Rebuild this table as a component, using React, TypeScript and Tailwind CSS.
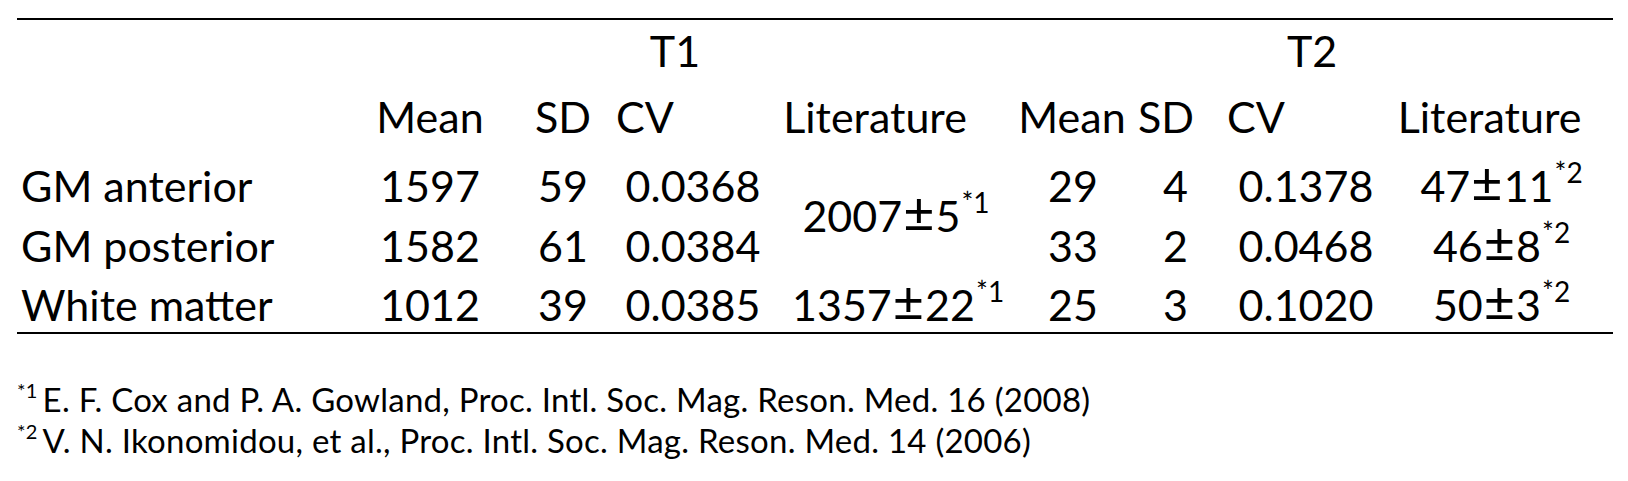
import React from 'react';

type Row = {
  label: string;
  mean1: string;
  sd1: string;
  cv1: string;
  lit1?: { a: string; b: string; rowSpan: number; pad: string };
  mean2: string;
  sd2: string;
  cv2: string;
  lit2: { a: string; b: string };
  rowClass: string;
};

const rows: Row[] = [
  {
    label: 'GM anterior',
    mean1: '1597',
    sd1: '59',
    cv1: '0.0368',
    lit1: { a: '2007', b: '5', rowSpan: 2, pad: 'pt-[44px]' },
    mean2: '29',
    sd2: '4',
    cv2: '0.1378',
    lit2: { a: '47', b: '11' },
    rowClass: 'h-[64px] pt-[14px]',
  },
  {
    label: 'GM posterior',
    mean1: '1582',
    sd1: '61',
    cv1: '0.0384',
    mean2: '33',
    sd2: '2',
    cv2: '0.0468',
    lit2: { a: '46', b: '8' },
    rowClass: 'h-[60px] pt-[10px]',
  },
  {
    label: 'White matter',
    mean1: '1012',
    sd1: '39',
    cv1: '0.0385',
    lit1: { a: '1357', b: '22', rowSpan: 1, pad: 'pt-[9px]' },
    mean2: '25',
    sd2: '3',
    cv2: '0.1020',
    lit2: { a: '50', b: '3' },
    rowClass: 'h-[58px] pt-[9px]',
  },
];

const PlusMinus = ({ a, b, n }: { a: string; b: string; n: string }) => (
  <>
    {a}
    <span className="mx-[1px] text-[54px] leading-[0]">±</span>
    {b}
    <span className="ml-[1px] text-[28px] leading-[0] align-[19px]">*{n}</span>
  </>
);

export default function App() {
  return (
    <div className="w-[1628px] h-[481px] overflow-hidden bg-white text-black font-[Lato,sans-serif]">
      <div className="pt-[18px]">
        <div className="ml-[17px] w-[1596px] border-t-2 border-b-2 border-black">
          <table className="w-[1596px] table-fixed text-[43px] leading-none">
            <colgroup>
              <col className="w-[333px]" />
              <col className="w-[160px]" />
              <col className="w-[106px]" />
              <col className="w-[154px]" />
              <col className="w-[230px]" />
              <col className="w-[138px]" />
              <col className="w-[62px]" />
              <col className="w-[190px]" />
              <col className="w-[223px]" />
            </colgroup>
            <tbody>
              <tr>
                <td className="h-[64px] align-top pt-[9px]" />
                <td colSpan={4} className="h-[64px] align-top pt-[9px] text-center">
                  T1
                </td>
                <td colSpan={4} className="h-[64px] align-top pt-[9px] pl-[11px] text-center">
                  T2
                </td>
              </tr>
              <tr className="whitespace-nowrap">
                <td className="h-[66px] align-top pt-[11px]" />
                <td className="h-[66px] align-top pt-[11px] text-center">Mean</td>
                <td className="h-[66px] align-top pt-[11px] text-center">SD</td>
                <td className="h-[66px] align-top pt-[11px] text-left">CV</td>
                <td className="h-[66px] align-top pt-[11px] pr-[20px] text-center">Literature</td>
                <td className="h-[66px] align-top pt-[11px] pl-[6px] text-center">Mean</td>
                <td className="h-[66px] align-top pt-[11px] text-left">SD</td>
                <td className="h-[66px] align-top pt-[11px] pl-[27px] text-left">CV</td>
                <td className="h-[66px] align-top pt-[11px] pr-[24px] text-center">Literature</td>
              </tr>
              {rows.map((r) => (
                <tr key={r.label} className="whitespace-nowrap">
                  <td className={`${r.rowClass} align-top pl-[4px] text-left`}>{r.label}</td>
                  <td className={`${r.rowClass} align-top text-center`}>{r.mean1}</td>
                  <td className={`${r.rowClass} align-top text-center`}>{r.sd1}</td>
                  <td className={`${r.rowClass} align-top text-center`}>{r.cv1}</td>
                  {r.lit1 && (
                    <td rowSpan={r.lit1.rowSpan} className={`${r.lit1.pad} align-top pl-[22px] text-center`}>
                      <PlusMinus a={r.lit1.a} b={r.lit1.b} n="1" />
                    </td>
                  )}
                  <td className={`${r.rowClass} align-top pl-[8px] text-center`}>{r.mean2}</td>
                  <td className={`${r.rowClass} align-top pr-[12px] text-right`}>{r.sd2}</td>
                  <td className={`${r.rowClass} align-top pl-[22px] text-center`}>{r.cv2}</td>
                  <td className={`${r.rowClass} align-top text-center`}>
                    <PlusMinus a={r.lit2.a} b={r.lit2.b} n="2" />
                  </td>
                </tr>
              ))}
            </tbody>
          </table>
        </div>

        {/* footnotes */}
        <div className="ml-[17px] mt-[49px] text-[33px] leading-none tracking-[0.25px] whitespace-nowrap">
          <div>
            <span className="mr-[5px] text-[20px] leading-[0] align-[14px]">*1</span>E. F. Cox and P. A. Gowland, Proc. Intl. Soc. Mag. Reson. Med. 16 (2008)
          </div>
          <div className="mt-[8px]">
            <span className="mr-[5px] text-[20px] leading-[0] align-[14px]">*2</span>V. N. Ikonomidou, et al., Proc. Intl. Soc. Mag. Reson. Med. 14 (2006)
          </div>
        </div>
      </div>
    </div>
  );
}
